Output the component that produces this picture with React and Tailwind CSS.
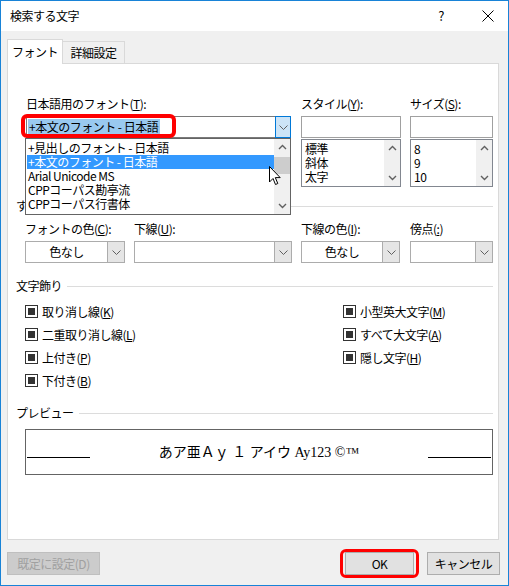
import React from "react";

const Acc = ({ children }) => <span className="underline">{children}</span>;

function Chevron({ up = false, color = "#606060" }) {
  return (
    <svg width="9" height="6" viewBox="0 0 9 6">
      <path
        d={up ? "M1 5 L4.5 1.5 L8 5" : "M1 1 L4.5 4.5 L8 1"}
        fill="none"
        stroke={color}
        strokeWidth="1.4"
      />
    </svg>
  );
}

function ThinChevron() {
  return (
    <svg width="9" height="5" viewBox="0 0 9 5">
      <path d="M0.5 0.5 L4.5 4.5 L8.5 0.5" fill="none" stroke="#606060" strokeWidth="1" />
    </svg>
  );
}

function Section({ label }) {
  return (
    <div className="flex items-center h-[14px] mr-[5px]">
      <span className="leading-[14px] whitespace-nowrap">{label}</span>
      <div className="flex-1 h-px bg-[#dcdcdc] ml-[5px]" />
    </div>
  );
}

function ScrollBar({ thumb = false }) {
  return (
    <div className="w-[16px] bg-[#f0f0f0] flex flex-col">
      <div className="h-[16px] flex items-center justify-center">
        <Chevron up />
      </div>
      <div className="flex-1">
        {thumb && <div className="mt-[2px] h-[17px] bg-[#cdcdcd]" />}
      </div>
      <div className="h-[16px] flex items-center justify-center">
        <Chevron />
      </div>
    </div>
  );
}

function ListBox({ items }) {
  return (
    <div className="mt-[1px] h-[48px] border border-[#828790] bg-white flex">
      <div className="flex-1 pt-[2px] pl-[3px]">
        {items.map((it) => (
          <div key={it} className="h-[14px] leading-[14px]">
            {it}
          </div>
        ))}
      </div>
      <ScrollBar />
    </div>
  );
}

function DropCombo({ w, text }) {
  return (
    <div className={`${w} h-[22px] border border-[#acacac] bg-white flex`}>
      <div className="flex-1 flex items-center justify-center">{text}</div>
      <div className="w-[17px] bg-[#e5e5e5] border-l border-[#acacac] flex items-center justify-center">
        <ThinChevron />
      </div>
    </div>
  );
}

function Check({ children }) {
  return (
    <div className="h-[23px] flex items-center">
      <span className="w-[13px] h-[13px] border border-[#333333] bg-white flex items-center justify-center">
        <span className="w-[7px] h-[7px] bg-[#333333]" />
      </span>
      <span className="ml-[4px] leading-[14px]">{children}</span>
    </div>
  );
}

const fontItems = [
  "+見出しのフォント - 日本語",
  "+本文のフォント - 日本語",
  "Arial Unicode MS",
  "CPPコーパス勘亭流",
  "CPPコーパス行書体",
];

export default function App() {
  return (
    <div className="w-[509px] h-[586px] border border-[#1883d7] bg-[#f0f0f0] flex flex-col text-[12px] text-black tracking-[-0.5px] font-['Noto_Sans_CJK_JP',sans-serif] overflow-hidden">
      {/* タイトルバー */}
      <div className="h-[30px] bg-white flex items-center pl-[9px]">
        <span className="leading-[14px]">検索する文字</span>
        <span className="ml-auto text-[13px] mr-[38px]">?</span>
        <svg width="12" height="12" viewBox="0 0 12 12" className="mr-[14px]">
          <path d="M0.5 0.5 L11.5 11.5 M11.5 0.5 L0.5 11.5" stroke="#000" strokeWidth="1" />
        </svg>
      </div>

      <div className="flex-1 pl-[6px] pt-[8px] pb-[7px] flex flex-col">
        {/* タブ */}
        <div className="flex items-end h-[24px]">
          <div className="relative z-10 w-[56px] h-[25px] -mb-px bg-white border border-b-0 border-[#d9d9d9] flex items-center justify-center">
            フォント
          </div>
          <div className="w-[62px] h-[22px] bg-[#f0f0f0] border border-l-0 border-b-0 border-[#d9d9d9] flex items-center justify-center">
            詳細設定
          </div>
        </div>

        {/* パネル */}
        <div className="relative w-[492px] h-[477px] bg-white border border-[#d9d9d9] pl-[8px] flex flex-col">
          {/* フォント行 */}
          <div className="mt-[33px] ml-[10px] flex">
            <div className="w-[265px]">
              <div className="h-[14px] leading-[14px]">
                日本語用のフォント(<Acc>T</Acc>):
              </div>
              <div className="relative mt-[5px] h-[22px] border border-[#7a7a7a] bg-white flex">
                <div className="flex-1 flex items-center pl-[1px]">
                  <span className="bg-[#99c9ef] h-[16px] leading-[16px] pl-[1px] pr-[2px]">
                    +本文のフォント - 日本語
                  </span>
                </div>
                <div className="w-[16px] bg-[#cce4f7] border border-[#0078d7] -my-px -mr-px flex items-center justify-center">
                  <ThinChevron />
                </div>
                <div className="absolute left-[-6px] top-[-3px] w-[155px] h-[24px] border-[4px] border-[#ff0000] rounded-[6px]" />
              </div>
            </div>
            <div className="ml-[10px] w-[100px]">
              <div className="h-[14px] leading-[14px]">
                スタイル(<Acc>Y</Acc>):
              </div>
              <div className="mt-[5px] h-[22px] border border-[#a0a0a0] bg-white" />
              <ListBox items={["標準", "斜体", "太字"]} />
            </div>
            <div className="ml-[9px] w-[83px]">
              <div className="h-[14px] leading-[14px]">
                サイズ(<Acc>S</Acc>):
              </div>
              <div className="mt-[5px] h-[22px] border border-[#a0a0a0] bg-white" />
              <ListBox items={["8", "9", "10"]} />
            </div>
          </div>

          <div className="mt-[12px]">
            <Section label="すべての文字列" />
          </div>

          {/* 色・下線行 */}
          <div className="mt-[9px] ml-[9px] flex">
            <div className="w-[100px]">
              <div className="h-[14px] leading-[14px]">
                フォントの色(<Acc>C</Acc>):
              </div>
              <div className="mt-[5px]">
                <DropCombo w="w-[100px]" text="色なし" />
              </div>
            </div>
            <div className="ml-[9px] w-[158px]">
              <div className="h-[14px] leading-[14px]">
                下線(<Acc>U</Acc>):
              </div>
              <div className="mt-[5px]">
                <DropCombo w="w-[158px]" text="" />
              </div>
            </div>
            <div className="ml-[9px] w-[99px]">
              <div className="h-[14px] leading-[14px]">
                下線の色(<Acc>I</Acc>):
              </div>
              <div className="mt-[5px]">
                <DropCombo w="w-[99px]" text="色なし" />
              </div>
            </div>
            <div className="ml-[10px] w-[83px]">
              <div className="h-[14px] leading-[14px]">
                傍点(<Acc>:</Acc>)
              </div>
              <div className="mt-[5px]">
                <DropCombo w="w-[83px]" text="" />
              </div>
            </div>
          </div>

          <div className="mt-[16px]">
            <Section label="文字飾り" />
          </div>

          {/* 文字飾り */}
          <div className="mt-[7px] ml-[9px] flex">
            <div className="w-[318px]">
              <Check>
                取り消し線(<Acc>K</Acc>)
              </Check>
              <Check>
                二重取り消し線(<Acc>L</Acc>)
              </Check>
              <Check>
                上付き(<Acc>P</Acc>)
              </Check>
              <Check>
                下付き(<Acc>B</Acc>)
              </Check>
            </div>
            <div>
              <Check>
                小型英大文字(<Acc>M</Acc>)
              </Check>
              <Check>
                すべて大文字(<Acc>A</Acc>)
              </Check>
              <Check>
                隠し文字(<Acc>H</Acc>)
              </Check>
            </div>
          </div>

          <div className="mt-[14px]">
            <Section label="プレビュー" />
          </div>

          {/* プレビュー */}
          <div className="mt-[9px] ml-[9px] mr-[5px] h-[46px] border border-[#646464] flex items-center tracking-normal">
            <div className="ml-[1px] w-[63px] h-px bg-black mt-[10px]" />
            <div className="flex-1 text-center text-[14px] font-['Liberation_Serif','Noto_Sans_CJK_JP',serif]">
              あア亜Ａｙ １ アイウ Ay123 ©™
            </div>
            <div className="mr-[1px] w-[63px] h-px bg-black mt-[10px]" />
          </div>

          {/* フォント一覧（展開中） */}
          <div className="absolute z-20 left-[17px] top-[74px] w-[266px] h-[77px] border border-[#646464] bg-white flex">
            <div className="flex-1 pt-[2px] pl-[1px]">
              {fontItems.map((f, i) => (
                <div
                  key={f}
                  className={`h-[14px] leading-[14px] pl-[1px] ${
                    i === 1 ? "bg-[#3399ff] text-white" : ""
                  }`}
                >
                  {f}
                </div>
              ))}
            </div>
            <ScrollBar thumb />
          </div>

          {/* マウスカーソル */}
          <svg
            width="13"
            height="20"
            viewBox="0 0 13 20"
            className="absolute z-30 left-[261px] top-[102px]"
          >
            <path
              d="M0.5 0.5 L0.5 16 L4 12.5 L6.5 18.5 L8.8 17.5 L6.3 11.6 L11.2 11.6 Z"
              fill="#fff"
              stroke="#000"
              strokeWidth="1"
            />
          </svg>
        </div>

        {/* ボタン */}
        <div className="mt-[9px] h-[29px] w-[493px] flex items-center">
          <button className="w-[93px] h-[23px] bg-[#cccccc] border border-[#bfbfbf] text-[#a0a0a0]">
            既定に設定(D)
          </button>
          <div className="ml-auto border-[3px] border-[#ff0000] rounded-[6px] px-[2px]">
            <button className="block w-[69px] h-[23px] bg-[#e1e1e1] border border-[#adadad]">
              OK
            </button>
          </div>
          <button className="ml-[8px] w-[73px] h-[23px] bg-[#e1e1e1] border border-[#adadad]">
            キャンセル
          </button>
        </div>
      </div>
    </div>
  );
}
